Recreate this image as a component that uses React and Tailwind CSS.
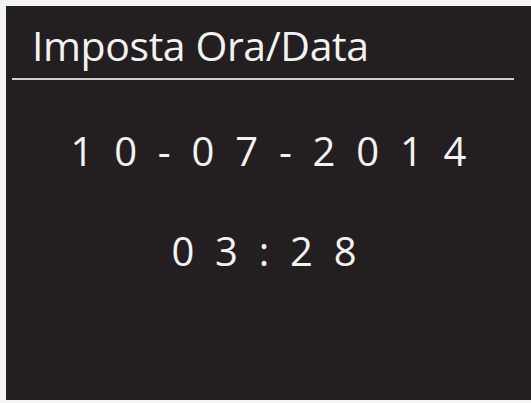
import React from 'react';

export default function App() {
  return (
    <div className="w-[531px] h-[403px] bg-[#f4f4f4] pt-[6px] pl-[6px] pb-[3px]">
      <div className="h-full bg-[#231f20] flex flex-col text-[#f2f2f2]" style={{ fontFamily: '"Open Sans", "Noto Sans", sans-serif' }}>
        {/* Header */}
        <div className="px-[6px]">
          <div className="h-[72px] flex items-end pb-[12px] pl-[20px]">
            <h1 className="text-[41px] leading-none tracking-[-0.01em]">Imposta Ora/Data</h1>
          </div>
          <div className="h-[2px] bg-[#cfcfcf] mr-[11px]" />
        </div>

        {/* Date / time */}
        <div className="flex flex-col items-center pt-[51px] gap-[60px] text-[40px] leading-none">
          <div className="tracking-[0.52em] pl-[0.52em]">10-07-2014</div>
          <div className="tracking-[0.52em] pl-[0.52em] mr-[9px]">03:28</div>
        </div>
      </div>
    </div>
  );
}
